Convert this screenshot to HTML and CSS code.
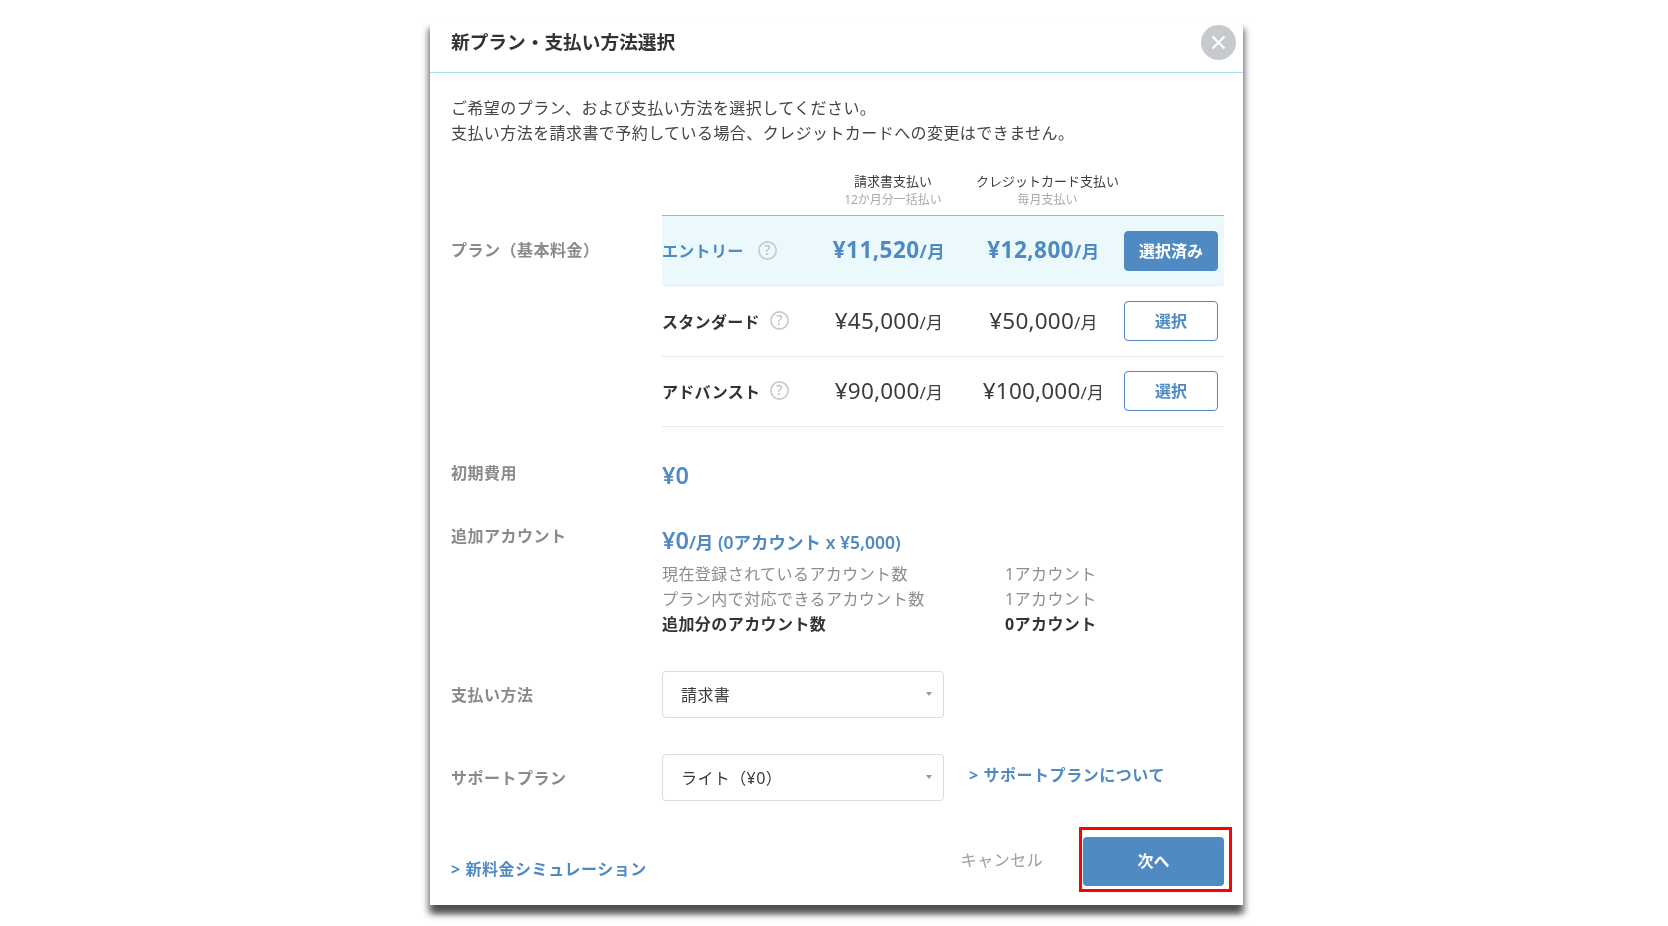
FILE: index.html
```html
<!DOCTYPE html>
<html lang="ja">
<head>
<meta charset="utf-8">
<title>新プラン・支払い方法選択</title>
<link rel="stylesheet" href="styles.css">
</head>
<body>
<div class="stage">
  <section class="modal">
    <header class="modal-head">
      <h1 class="modal-title">新プラン・支払い方法選択</h1>
      <button class="close" type="button" aria-label="閉じる">
        <svg width="15" height="15" viewBox="0 0 15 15"><path d="M1.5 1.5l12 12M13.5 1.5l-12 12" stroke="#fff" stroke-width="2.2" fill="none"/></svg>
      </button>
    </header>
    <div class="modal-body">
      <p class="intro">ご希望のプラン、および支払い方法を選択してください。<br>支払い方法を請求書で予約している場合、クレジットカードへの変更はできません。</p>

      <div class="plan-section">
        <div class="label plan-label">プラン（基本料金）</div>
        <div class="plan-table">
          <div class="plan-head">
            <div></div>
            <div class="head-cell"><div class="head-main">請求書支払い</div><div class="head-sub">12か月分一括払い</div></div>
            <div class="head-cell"><div class="head-main">クレジットカード支払い</div><div class="head-sub">毎月支払い</div></div>
          </div>
          <div class="plan-row plan-row-active">
            <div class="plan-name">エントリー<svg class="help help-wide" width="19" height="19" viewBox="0 0 19 19"><circle cx="9.5" cy="9.5" r="8.6" fill="none" stroke="#c9c9c9" stroke-width="1.6"/><text x="9.5" y="14.4" text-anchor="middle" class="help-mark">?</text></svg></div>
            <div class="price">¥11,520<span class="unit">/月</span></div>
            <div class="price">¥12,800<span class="unit">/月</span></div>
            <button class="pick pick-on" type="button">選択済み</button>
          </div>
          <div class="plan-row plan-row-mid">
            <div class="plan-name">スタンダード<svg class="help" width="19" height="19" viewBox="0 0 19 19"><circle cx="9.5" cy="9.5" r="8.6" fill="none" stroke="#c9c9c9" stroke-width="1.6"/><text x="9.5" y="14.4" text-anchor="middle" class="help-mark">?</text></svg></div>
            <div class="price">¥45,000<span class="unit">/月</span></div>
            <div class="price">¥50,000<span class="unit">/月</span></div>
            <button class="pick" type="button">選択</button>
          </div>
          <div class="plan-row plan-row-last">
            <div class="plan-name">アドバンスト<svg class="help" width="19" height="19" viewBox="0 0 19 19"><circle cx="9.5" cy="9.5" r="8.6" fill="none" stroke="#c9c9c9" stroke-width="1.6"/><text x="9.5" y="14.4" text-anchor="middle" class="help-mark">?</text></svg></div>
            <div class="price">¥90,000<span class="unit">/月</span></div>
            <div class="price">¥100,000<span class="unit">/月</span></div>
            <button class="pick" type="button">選択</button>
          </div>
        </div>
      </div>

      <div class="field field-initial">
        <div class="label">初期費用</div>
        <div class="amount">¥0</div>
      </div>

      <div class="field field-accounts">
        <div class="label">追加アカウント</div>
        <div class="accounts">
          <div class="amount amount-line">¥0<span class="amount-rest">/月 (0アカウント x ¥5,000)</span></div>
          <div class="count"><span class="count-key">現在登録されているアカウント数</span><span>1アカウント</span></div>
          <div class="count"><span class="count-key">プラン内で対応できるアカウント数</span><span>1アカウント</span></div>
          <div class="count count-total"><span class="count-key">追加分のアカウント数</span><span>0アカウント</span></div>
        </div>
      </div>

      <div class="field field-pay">
        <div class="label">支払い方法</div>
        <div class="select"><span>請求書</span><i class="caret"></i></div>
      </div>

      <div class="field field-support">
        <div class="label">サポートプラン</div>
        <div class="select"><span>ライト（¥0）</span><i class="caret"></i></div>
        <a class="link link-support" href="#">&gt; サポートプランについて</a>
      </div>

      <footer class="modal-foot">
        <a class="link" href="#">&gt; 新料金シミュレーション</a>
        <div class="foot-actions">
          <button class="cancel" type="button">キャンセル</button>
          <div class="next-wrap">
            <button class="next" type="button">次へ</button>
            <div class="annotation"></div>
          </div>
        </div>
      </footer>
    </div>
  </section>
</div>
</body>
</html>
```
FILE: styles.css
```css
* { box-sizing: border-box; }
html, body { margin: 0; height: 100%; background: #fff; overflow: hidden; }
body {
  font-family: "Noto Sans", "Noto Sans CJK JP", sans-serif;
  font-size: 16px;
  color: #3c3c3c;
}
button { font-family: inherit; cursor: pointer; }
.stage { padding: 20px 0 0 430px; }
.modal {
  width: 813px;
  height: 885px;
  background: #fff;
  box-shadow: 0 9px 7px rgba(0,0,0,.5), -3px 8px 6px rgba(0,0,0,.22), 3px 8px 6px rgba(0,0,0,.22);
  filter: blur(.35px);
}
.modal-head {
  height: 53px;
  border-bottom: 1px solid #a3e0f6;
  display: flex;
  align-items: center;
  justify-content: space-between;
  padding: 0 7px 8px 21px;
}
.modal-title { margin: 0; font-size: 18.7px; font-weight: 700; color: #333; line-height: 26px; }
.close {
  width: 35px; height: 35px; border: 0; border-radius: 50%;
  background: #c6cacf;
  display: flex; align-items: center; justify-content: center; padding: 0;
}
.modal-body { padding: 0 19px 0 21px; }
.intro { margin: 0; padding-top: 23px; line-height: 25px; letter-spacing: .43px; color: #444; }
.label { width: 211px; flex: none; font-weight: 700; color: #8a8a8a; letter-spacing: .5px; white-space: nowrap; }
.plan-section { display: flex; margin-top: 25px; }
.plan-label { padding-top: 67px; line-height: 24px; }
.plan-table { width: 562px; }
.plan-head, .plan-row {
  display: grid;
  grid-template-columns: 153px 148px 161px 94px;
  align-items: center;
}
.plan-head { height: 45px; align-items: start; border-bottom: 1px solid #aeb0b2; }
.head-cell { text-align: center; padding: 1px 0 0 8px; white-space: nowrap; }
.head-main { font-size: 13px; line-height: 19px; color: #3c3c3c; }
.head-sub { font-size: 12px; line-height: 18px; color: #aaa; }
.plan-row { height: 69.5px; border-bottom: 1px solid #e9e9e9; }
.plan-row-active { height: 70px; background: #ebf9fc; border-radius: 0 0 3px 3px; }
.plan-row-mid { height: 71px; }
.plan-name { display: flex; align-items: center; font-weight: 700; color: #333; letter-spacing: .3px; padding-bottom: 1px; }
.plan-row-active .plan-name, .plan-row-active .price { color: #4f8ac2; }
.plan-row-active .price { font-weight: 700; letter-spacing: .45px; }
.help { margin-left: 10px; flex: none; }
.help-wide { margin-left: 14px; }
.help-mark { font-size: 14px; fill: #b8b8b8; font-weight: 400; }
.price { text-align: center; font-size: 22.5px; white-space: nowrap; color: #3c3c3c; letter-spacing: .2px; padding-bottom: 2px; }
.unit { font-size: 17px; }
.plan-row-active .unit { font-size: 17.5px; }
.pick {
  height: 40px; width: 94px;
  border: 1px solid #5089c1; border-radius: 4px;
  background: #fff; color: #4f8ac2;
  font-size: 16px; font-weight: 700; padding: 0 0 2px;
}
.pick-on { background: #4f8ac2; color: #fff; }
.field { display: flex; }
.field-initial { margin-top: 34px; height: 40px; line-height: 24px; }
.amount { color: #4f8ac2; font-size: 23.5px; font-weight: 600; line-height: 32px; margin-top: -2px; }
.field-accounts { margin-top: 22px; }
.field-accounts .label { line-height: 24px; padding-top: 1px; }
.amount-line { line-height: 30px; margin: 2px 0 5.5px; }
.amount-rest { font-size: 17.5px; }
.count { display: flex; line-height: 25px; color: #8d8d8d; letter-spacing: .43px; white-space: nowrap; }
.count-key { width: 343px; }
.count-total { font-weight: 700; color: #333; }
.field-pay { margin-top: 33.5px; align-items: center; }
.field-support { margin-top: 36px; align-items: center; position: relative; }
.select {
  width: 282px; height: 47px;
  border: 1px solid #dcdcdc; border-radius: 4px;
  display: flex; align-items: center; justify-content: space-between;
  padding: 0 11px 0 18px; color: #3c3c3c; letter-spacing: .4px;
}
.caret { width: 0; height: 0; border-left: 3px solid transparent; border-right: 3px solid transparent; border-top: 4px solid #999; }
.link { color: #4f8ac2; font-weight: 700; text-decoration: none; letter-spacing: .55px; }
.link-support { margin: -7px 0 0 25px; white-space: nowrap; }
.modal-foot { display: flex; justify-content: space-between; align-items: flex-start; margin-top: 36px; }
.modal-foot > .link { padding-top: 20px; line-height: 24px; }
.foot-actions { display: flex; align-items: center; }
.cancel { background: none; border: 0; padding: 0 0 2px; margin-right: 40px; color: #a0a0a0; font-size: 16.3px; line-height: 24px; letter-spacing: .2px; }
.next-wrap { position: relative; }
.next {
  display: block; width: 141px; height: 49px;
  border: 0; border-radius: 4px; background: #4f8ac2; padding: 0 0 2px;
  color: #fff; font-size: 16px; font-weight: 700;
}
.annotation {
  position: absolute; left: -4px; top: -10px; width: 153px; height: 65px;
  border: 3.5px solid #f00;
}
```
